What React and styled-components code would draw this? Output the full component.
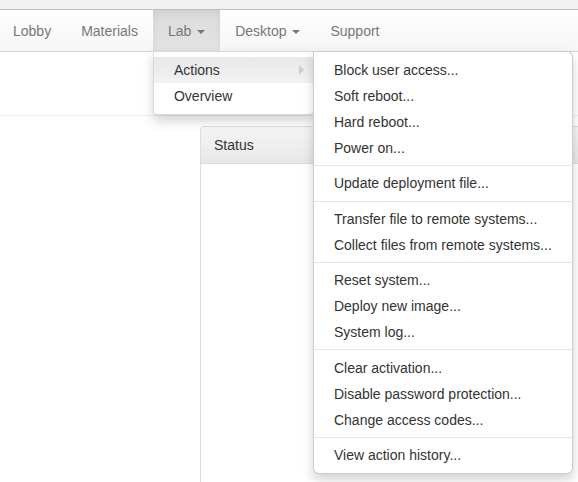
import React from 'react'
import styled, {createGlobalStyle} from 'styled-components'

const actionGroups = [
    ['Block user access...', 'Soft reboot...', 'Hard reboot...', 'Power on...'],
    ['Update deployment file...'],
    ['Transfer file to remote systems...', 'Collect files from remote systems...'],
    ['Reset system...', 'Deploy new image...', 'System log...'],
    ['Clear activation...', 'Disable password protection...', 'Change access codes...'],
    ['View action history...'],
]

const navItems = [
    {label: 'Lobby'},
    {label: 'Materials'},
    {label: 'Lab', caret: true, active: true},
    {label: 'Desktop', caret: true},
    {label: 'Support'},
]

const App = () => {
    return (
        <>
            <GlobalStyle/>
            <TopStrip/>
            <Navbar>
                <NavList>
                    {navItems.map(item => (
                        <NavItem key={item.label} $active={item.active}>
                            <NavLink>
                                {item.label}
                                {item.caret && <> <Caret/></>}
                            </NavLink>
                            {item.active && (
                                <DropdownMenu>
                                    <MenuItem $hover>
                                        <MenuLink>Actions</MenuLink>
                                        <SubArrow/>
                                        <SubMenu>
                                            {actionGroups.map((group, gi) => (
                                                <React.Fragment key={gi}>
                                                    {gi > 0 && <Divider/>}
                                                    {group.map(label => (
                                                        <MenuItem key={label}>
                                                            <MenuLink>{label}</MenuLink>
                                                        </MenuItem>
                                                    ))}
                                                </React.Fragment>
                                            ))}
                                        </SubMenu>
                                    </MenuItem>
                                    <MenuItem>
                                        <MenuLink>Overview</MenuLink>
                                    </MenuItem>
                                </DropdownMenu>
                            )}
                        </NavItem>
                    ))}
                </NavList>
            </Navbar>
            <SubHeader/>
            <Content>
                <Sidebar/>
                <Panel>
                    <PanelHeading>Status</PanelHeading>
                </Panel>
            </Content>
        </>
    )
}

export default App

const GlobalStyle = createGlobalStyle`
    * {
        box-sizing: border-box;
    }
    body {
        margin: 0;
        background: #fff;
        font-family: "Liberation Sans", Arial, sans-serif;
        font-size: 14px;
        line-height: 20px;
        color: #333;
        overflow: hidden;
    }
`
const TopStrip = styled.div`
    height: 10px;
    background: #f2f2f2;
    border-bottom: 1px solid #bdbdbd;
`
const Navbar = styled.nav`
    height: 42px;
    background: linear-gradient(to bottom, #ffffff 0, #f6f6f6 100%);
    border-bottom: 1px solid #d4d4d4;
    position: relative;
    z-index: 10;
`
const NavList = styled.ul`
    display: flex;
    list-style: none;
    margin: 0 0 0 -2px;
    padding: 0;
    height: 41px;
`
const NavItem = styled.li`
    position: relative;
    background: ${({$active}) => $active ? 'linear-gradient(to bottom, #dbdbdb 0, #e4e4e4 100%)' : 'transparent'};
    box-shadow: ${({$active}) => $active ? 'inset 0 3px 9px rgba(0,0,0,0.06)' : 'none'};
`
const NavLink = styled.a`
    display: block;
    padding: 11px 15px 10px;
    color: #777;
    white-space: nowrap;
    cursor: pointer;
`
const Caret = styled.span`
    display: inline-block;
    width: 0;
    height: 0;
    margin-left: 2px;
    vertical-align: middle;
    border-top: 4px solid #777;
    border-left: 4px solid transparent;
    border-right: 4px solid transparent;
`
const DropdownMenu = styled.ul`
    position: absolute;
    top: 100%;
    left: 0;
    width: 161px;
    margin: 0;
    padding: 5px 0;
    list-style: none;
    background: #fff;
    border: 1px solid rgba(0,0,0,0.15);
    border-radius: 0 0 4px 4px;
    box-shadow: 0 6px 12px rgba(0,0,0,0.175);
`
const MenuItem = styled.li`
    position: relative;
    background: ${({$hover}) => $hover ? 'linear-gradient(to bottom, #e8e8e8 0, #f2f2f2 100%)' : 'transparent'};
`
const MenuLink = styled.a`
    display: block;
    padding: 3px 20px;
    line-height: 20px;
    color: #333;
    white-space: nowrap;
    cursor: pointer;
`
const SubArrow = styled.span`
    position: absolute;
    right: 9px;
    top: 8px;
    width: 0;
    height: 0;
    border-top: 5px solid transparent;
    border-bottom: 5px solid transparent;
    border-left: 5px solid #ccc;
`
const SubMenu = styled.ul`
    position: absolute;
    top: -6px;
    left: 100%;
    margin: 0;
    padding: 5px 0;
    list-style: none;
    background: #fff;
    border: 1px solid rgba(0,0,0,0.2);
    border-radius: 0 6px 6px 6px;
    box-shadow: 0 6px 12px rgba(0,0,0,0.175);
`
const Divider = styled.li`
    height: 1px;
    margin: 4.2px 0;
    background: #e5e5e5;
`
const SubHeader = styled.div`
    height: 64px;
    border-bottom: 1px solid #eee;
`
const Content = styled.div`
    display: grid;
    grid-template-columns: 200px 440px;
    padding-top: 10px;
`
const Sidebar = styled.div``
const Panel = styled.div`
    height: 420px;
    border: 1px solid #ddd;
    border-radius: 4px;
    background: #fff;
`
const PanelHeading = styled.div`
    padding: 8px 13px;
    line-height: 20px;
    color: #333;
    background: linear-gradient(to bottom, #f5f5f5 0, #e8e8e8 100%);
    border-bottom: 1px solid #ddd;
    border-radius: 3px 3px 0 0;
`
